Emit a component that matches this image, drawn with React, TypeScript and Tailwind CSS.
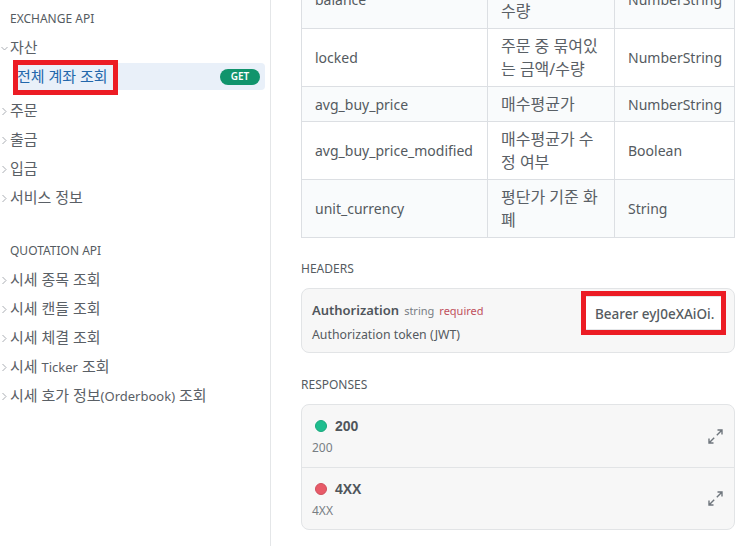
import React from "react";

function Chevron({ open }: { open?: boolean }) {
  return (
    <svg width="7" height="9" viewBox="0 0 7 9" fill="none" className="absolute left-[1px] top-[11px]">
      {open ? (
        <path d="M0.5 3 L3.5 6 L6.5 3" stroke="#a9adb3" strokeWidth="1" />
      ) : (
        <path d="M1.5 1 L5 4.5 L1.5 8" stroke="#a9adb3" strokeWidth="1" />
      )}
    </svg>
  );
}

function NavItem({ children, open }: { children: React.ReactNode; open?: boolean }) {
  return (
    <div className="relative h-[29px] pl-[10px] text-[15px] leading-[29px] text-[#5a6066] whitespace-nowrap">
      <Chevron open={open} />
      {children}
    </div>
  );
}

function Expand() {
  return (
    <svg width="15" height="15" viewBox="0 0 15 15" fill="none" stroke="#6f767d" strokeWidth="1.4">
      <path d="M14 1 L8.8 6.2 M9.5 1 H14 V5.5" />
      <path d="M1 14 L6.2 8.8 M1 9.5 V14 H5.5" />
    </svg>
  );
}

const rows = [
  { a: "balance", b: ["주문가능 금액/", "수량"], c: "NumberString", h: "h-[58px]", bg: "bg-[#f9fbfc]" },
  { a: "locked", b: ["주문 중 묶여있", "는 금액/수량"], c: "NumberString", h: "h-[58px]", bg: "bg-white" },
  { a: "avg_buy_price", b: ["매수평균가"], c: "NumberString", h: "h-[35px]", bg: "bg-[#f9fbfc]" },
  { a: "avg_buy_price_modified", b: ["매수평균가 수", "정 여부"], c: "Boolean", h: "h-[58px]", bg: "bg-white" },
  { a: "unit_currency", b: ["평단가 기준 화", "폐"], c: "String", h: "h-[57px]", bg: "bg-[#f9fbfc]" },
];

function Response({ code, dot, h, border }: { code: string; dot: string; h: string; border: string }) {
  return (
    <div className={`flex items-center justify-between pl-[10px] pr-[11px] ${h} ${border}`}>
      <div>
        <div
          className="mt-[1px] flex items-center gap-[8px] pl-[3px] text-[14px] font-bold leading-[20px] text-[#4f555b]"
          style={{ fontFamily: '"Liberation Sans", sans-serif' }}
        >
          <span className={`h-[12px] w-[12px] rounded-full border ${dot}`} />
          {code}
        </div>
        <div className="mt-[3px] text-[12px] leading-[18px] text-[#787e84]">{code}</div>
      </div>
      <Expand />
    </div>
  );
}

export default function App() {
  return (
    <div
      className="relative flex h-[546px] w-[750px] overflow-hidden bg-white text-[#545a60]"
      style={{ fontFamily: '"Noto Sans", "Noto Sans CJK KR", sans-serif' }}
    >
      <aside className="h-full w-[271px] shrink-0 border-r border-[#e4e6e8] pr-[5px] pt-[10px]">
        <div className="h-[18px] pl-[10px] text-[12px] leading-[18px] text-[#555b61]">EXCHANGE API</div>
        <div className="mt-[5px]">
          <NavItem open>자산</NavItem>
          <div className="mt-[1px] ml-[14px] flex h-[27px] items-center justify-between rounded-[4px] bg-[#e9f0f9] pl-[3px] pr-[5px]">
            <span className="text-[15px] text-[#2267ab]">전체 계좌 조회</span>
            <span className="flex h-[16px] w-[40px] items-center justify-center rounded-full bg-[#11946c] text-[10px] font-semibold text-white">GET</span>
          </div>
          <div className="mt-[6px]">
            <NavItem>주문</NavItem>
            <NavItem>출금</NavItem>
            <NavItem>입금</NavItem>
            <NavItem>서비스 정보</NavItem>
          </div>
        </div>
        <div className="mt-[30px] h-[18px] pl-[10px] text-[12px] leading-[18px] text-[#555b61]">QUOTATION API</div>
        <div className="mt-[5px]">
          <NavItem>시세 종목 조회</NavItem>
          <NavItem>시세 캔들 조회</NavItem>
          <NavItem>시세 체결 조회</NavItem>
          <NavItem>
            시세 <span className="text-[13px]">Ticker</span> 조회
          </NavItem>
          <NavItem>
            시세 호가 정보<span className="text-[13px]">(Orderbook)</span> 조회
          </NavItem>
        </div>
      </aside>

      <main className="min-w-0 flex-1 pl-[30px] pr-[15px]">
        <div className="mt-[-29px] w-[434px] border-b border-l border-r border-[#dcdfe3] text-[14px]">
          {rows.map((r) => (
            <div key={r.a} className={`flex border-b border-[#dcdfe3] last:border-b-0 ${r.h} ${r.bg}`}>
              <div className="flex w-[186px] items-center border-r border-[#dcdfe3] pl-[13px]">{r.a}</div>
              <div className="flex w-[127px] flex-col justify-center border-r border-[#dcdfe3] pl-[13px] text-[16px] leading-[23px] text-[#5a6066]">
                {r.b.map((t) => (
                  <div key={t} className="whitespace-nowrap">{t}</div>
                ))}
              </div>
              <div className="flex flex-1 items-center pl-[13px]">{r.c}</div>
            </div>
          ))}
        </div>

        <div className="mt-[22px] text-[12px] leading-[18px] text-[#555b61]">HEADERS</div>
        <div className="mt-[10px] flex h-[65px] w-[434px] items-start justify-between rounded-[8px] border border-[#e2e4e6] bg-[#f7f7f7] pl-[10px] pr-[13px]">
          <div className="pt-[11px]">
            <div className="flex items-baseline gap-[5px] leading-[20px]">
              <span className="text-[13px] font-semibold text-[#4f555b]">Authorization</span>
              <span className="text-[11px] text-[#777d83]">string</span>
              <span className="text-[11px] text-[#c0505c]">required</span>
            </div>
            <div className="mt-[4px] text-[12.3px] leading-[20px]">Authorization token (JWT)</div>
          </div>
          <div className="mt-[7px] flex h-[34px] w-[135px] items-center overflow-hidden whitespace-nowrap border-y border-[#e4e6e8] bg-white pl-[9px] pt-[3px] text-[13.5px] font-medium text-[#555b61]">
            Bearer eyJ0eXAiOi.
          </div>
        </div>

        <div className="mt-[23px] text-[12px] leading-[18px] text-[#555b61]">RESPONSES</div>
        <div className="mt-[10px] w-[434px] rounded-[8px] border border-[#e2e4e6] bg-[#f7f7f7]">
          <Response code="200" dot="bg-[#1fbd8e] border-[#19a87d]" h="h-[63px]" border="border-b border-[#e2e4e6]" />
          <Response code="4XX" dot="bg-[#e85a68] border-[#cf505d]" h="h-[61px]" border="" />
        </div>
      </main>

      <div className="pointer-events-none absolute left-[13px] top-[60px] h-[35px] w-[105px] border-[5px] border-[#ec1c24]" />
      <div className="pointer-events-none absolute left-[581px] top-[291px] h-[44px] w-[145px] border-[5px] border-[#ec1c24]" />
    </div>
  );
}
